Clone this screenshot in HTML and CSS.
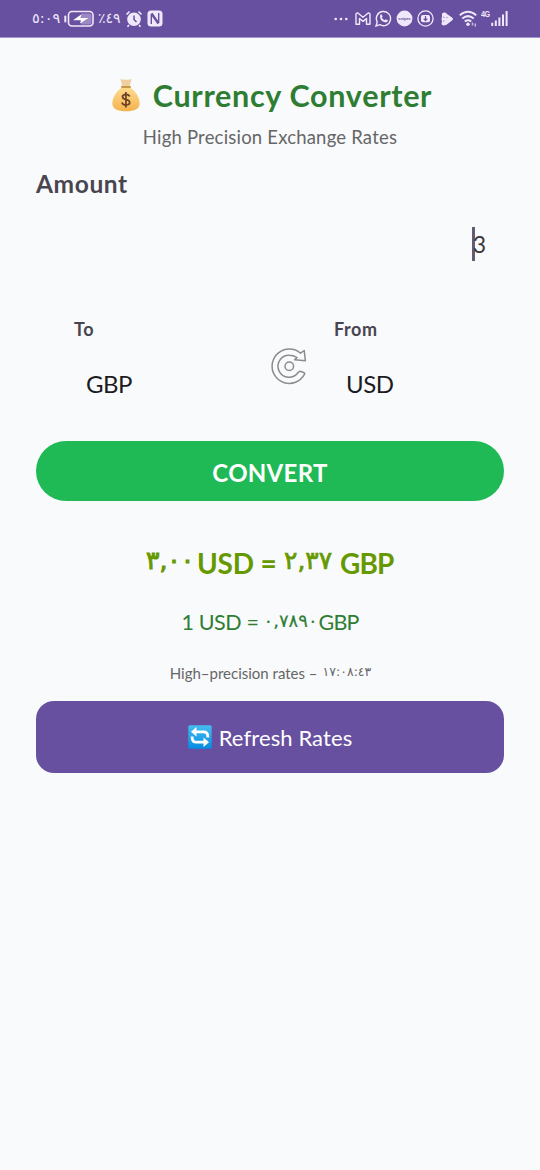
FILE: index.html
```html
<!DOCTYPE html>
<html lang="en">
<head>
<meta charset="utf-8">
<title>Currency Converter</title>
<link rel="stylesheet" href="styles.css">
</head>
<body>
<header class="status">
  <div class="status-left">
    <span class="ar clock">٥:٠٩</span>
    <svg class="battery" width="30" height="18" viewBox="0 0 30 18"><path d="M1.300 6.500v5" stroke="#efe8fa" stroke-width="2" stroke-linecap="round"/><rect x="4.500" y="1.500" width="24.500" height="14.500" rx="3.500" fill="#6850a1" stroke="#efe8fa" stroke-width="1.600"/><path d="M17 3.500h9q1.500 0 1.500 1.500v8q0 1.500-1.500 1.500H17z" fill="#9b88c5"/><path d="M9 10.300l8.500-6-1 3.700h8l-8.500 5.500 1-3.200z" fill="#fff"/></svg>
    <span class="ar percent">٪٤٩</span>
    <svg class="alarm" width="18" height="18" viewBox="0 0 18 18"><circle cx="9" cy="9.300" r="6.800" fill="#efe8fa"/><path d="M1.500 4.500l3-3M16.500 4.500l-3-3M4 15l-1.500 1.800M14 15l1.500 1.800" stroke="#efe8fa" stroke-width="1.600"/><path d="M9 5.500v4l2.500 2.500" fill="none" stroke="#6850a1" stroke-width="1.500"/></svg>
    <svg class="nfc" width="16" height="17" viewBox="0 0 16 17"><rect x=".5" y=".5" width="15" height="16" rx="3.500" fill="#efe8fa"/><path d="M4.300 14V4.500M11.700 12.500V3" fill="none" stroke="#6850a1" stroke-width="1.400"/><path d="M4.500 3.500l7 10" stroke="#6850a1" stroke-width="2.400"/></svg>
  </div>
  <div class="status-right">
    <svg class="dots" width="14" height="4" viewBox="0 0 14 4"><g fill="#efe8fa"><circle cx="1.700" cy="2" r="1.300"/><circle cx="7" cy="2" r="1.300"/><circle cx="12.300" cy="2" r="1.300"/></g></svg>
    <svg class="mail" width="16" height="14" viewBox="0 0 16 14"><path d="M1 2.500Q1 .8 2.800 1L8 5.300 13.200 1Q15 .8 15 2.500V12.300h-3.500V6.500L8 9.400 4.500 6.500v5.800H1z" fill="none" stroke="#efe8fa" stroke-width="1.400" stroke-linejoin="round"/></svg>
    <svg class="phone" width="17" height="17" viewBox="0 0 17 17"><path d="M1 16l1.200-4.100a7.100 7.100 0 1 1 2.700 2.800z" fill="none" stroke="#efe8fa" stroke-width="1.400"/><path d="M5.300 4.800l1.200-.5 1.200 2.300-.9 1q1 1.900 2.900 2.700l1-1.100 2.200 1.100q0 2-2.200 2.200Q5.400 11.500 5 7z" fill="#efe8fa"/></svg>
    <svg class="news" width="17" height="17" viewBox="0 0 17 17"><circle cx="8.500" cy="8.500" r="7.900" fill="#efe8fa"/><text x="8.500" y="10" text-anchor="middle" class="news-text">snipes</text></svg>
    <svg class="video" width="17" height="17" viewBox="0 0 17 17"><circle cx="8.500" cy="8.500" r="7.600" fill="none" stroke="#efe8fa" stroke-width="1.300"/><rect x="4" y="5" width="9" height="7.200" rx="2" fill="#efe8fa"/><path d="M8.500 6v4M6.700 8.600l1.800 2 1.800-2" fill="none" stroke="#6850a1" stroke-width="1.200"/></svg>
    <svg class="play" width="14" height="14" viewBox="0 0 14 14"><path d="M2 1.500Q5-.5 7 2l5 3.600q2 1.400 0 2.800l-5.500 4.400Q2 14.500 1.500 12L2 9.500 1.500 7 2 4.500z" fill="#efe8fa"/><path d="M3 4.800l1.500.7M3 9.300l1.500-.5" stroke="#9b88c5"/><circle cx="7" cy="5.500" r=".7" fill="#9b88c5"/></svg>
    <svg class="wifi" width="19" height="17" viewBox="0 0 19 17"><g fill="none" stroke="#efe8fa" stroke-width="2"><path d="M.8 5.200Q9 -1.800 17.200 5.200"/><path d="M3.300 8.500Q9 3.800 14.700 8.500"/><path d="M5.800 11.500Q9 9 12.200 11.500"/></g><circle cx="9" cy="14.300" r="1.700" fill="#efe8fa"/><path d="M13.500 12.500v3M16.300 13.500v3" stroke="#c7bae0" stroke-width="1.500"/></svg>
    <span class="net">4G</span>
    <svg class="signal" width="17" height="17" viewBox="0 0 17 17"><path d="M1.200 16v-3.300M4.800 16v-5.500M8.400 16V7.500M12 16V4.500M15.600 16V1" stroke="#efe8fa" stroke-width="2"/></svg>
  </div>
</header>
<main class="page">
  <h1 class="title">
    <svg width="30" height="34" viewBox="0 0 30 34"><defs><linearGradient id="bag" x2="0" y2="1"><stop offset="0" stop-color="#ffdc91"/><stop offset="1" stop-color="#f4b24e"/></linearGradient></defs><path d="M9.500 1q2.500 1 5.500 .8 3 .2 5.500-.8l-2 8.300h-7z" fill="#efcfa0"/><path d="M11 9h8q10 8 9.600 17Q28 33.300 15 33.300T1.400 26Q1 17 11 9z" fill="url(#bag)"/><rect x="10" y="8" width="10" height="2" rx="1" fill="#c9974e"/><path d="M18.600 18.500q-.7-2.200-3.600-2.200-3.500.1-3.500 2.500 0 2 3.400 2.700 3.800.7 3.800 3 0 2.400-3.800 2.500-3.300 0-3.900-2.500M14.900 14v15.500" fill="none" stroke="#6b4226" stroke-width="1.700"/></svg>
    <span class="title-text">Currency Converter</span>
  </h1>
  <p class="subtitle">High Precision Exchange Rates</p>
  <label class="amount-label">Amount</label>
  <div class="amount"><span class="caret"></span><span>3</span></div>
  <section class="pair">
    <div class="side"><div class="side-label to">To</div><div class="side-value gbp">GBP</div></div>
    <svg class="swap" width="40" height="40" viewBox="0 0 40 40"><g fill="none" stroke="#8c8c8c" stroke-width="1.500" stroke-linejoin="round"><circle cx="19.300" cy="20.200" r="4.300"/><path d="M30.500 7.200L34.200 4.500L35.400 14.800L24.600 13.800 27 11.600Q23.500 9.300 19.300 9.300a11 11 0 1 0 8.800 17.200q1-1.300 2.300-1.200L34 26.700q1.200 .6.400 1.700A17.200 17.200 0 1 1 19.300 3Q26 3 30.500 7.200z"/></g></svg>
    <div class="side"><div class="side-label from">From</div><div class="side-value usd">USD</div></div>
  </section>
  <button class="convert"><span>CONVERT</span></button>
  <div class="result"><span class="ar r1">٣,٠٠</span><span class="r2">USD =</span><span class="ar r3">٢,٣٧</span><span class="r4">GBP</span></div>
  <div class="rate"><span class="q1">1 USD =</span><span class="ar q2">٠,٧٨٩٠</span><span class="q3">GBP</span></div>
  <div class="updated"><span class="u1">High–precision rates –</span><span class="ar u2">١٧:٠٨:٤٣</span></div>
  <button class="refresh">
    <svg width="24" height="24" viewBox="0 0 24 24"><defs><linearGradient id="sky" x2="0" y2="1"><stop offset="0" stop-color="#45bdf0"/><stop offset="1" stop-color="#078ce3"/></linearGradient></defs><rect x=".3" y=".3" width="23.400" height="23.400" rx="1.500" fill="url(#sky)"/><path d="M7.500 6.800H15.500q4.300 0 4.300 4.500v1.200M16.500 17.200H8.500q-4.300 0-4.300-4.500v-1.200" fill="none" stroke="#fff" stroke-width="2.800"/><path d="M8.500 2v9.600L3 6.800zM15.500 12.400v9.600l5.500-4.800z" fill="#fff"/></svg>
    <span>Refresh Rates</span>
  </button>
</main>
</body>
</html>
```
FILE: styles.css
```css
* { box-sizing: border-box; }
body { margin: 0; min-height: 1170px; background: #f8fafc; font-family: Lato, sans-serif; color: #1c1b1f; }
svg { display: block; flex: none; }
button { border: 0; padding: 0; font-family: inherit; color: #fff; display: flex; align-items: center; justify-content: center; width: 100%; }
.ar { font-family: "DejaVu Sans", sans-serif; direction: ltr; unicode-bidi: bidi-override; white-space: nowrap; flex: none; }
.status { height: 38px; background: #6850a1; display: flex; justify-content: space-between; padding: 0 32px; color: #efe8fa; border-bottom: 1px solid #a595ca; }
.status-left, .status-right { display: flex; align-items: center; }
.clock { width: 27px; font-size: 14.500px; letter-spacing: -1.500px; margin-right: 5px; margin-top: -1px; }
.battery { margin-right: 4px; }
.percent { width: 23px; font-size: 14px; letter-spacing: -1.200px; margin: -2px 4px 0 0; }
.nfc { margin-left: 4px; }
.status-right { gap: 4px; }
.dots { margin-right: 3px; }
.news-text { font: bold 4px "Liberation Sans", sans-serif; fill: #6850a1; }
.play { margin-left: 2px; }
.wifi { margin-left: 1px; }
.net { font: bold 9px/10px "Liberation Sans", sans-serif; width: 8px; letter-spacing: -.5px; margin: -9px -2px 0 -1px; transform: scaleX(.8); transform-origin: left; }
.page { padding: 35px 36px 0; }
.title { margin: 0; height: 44px; display: flex; align-items: center; justify-content: center; gap: 12px; font-size: 30.500px; line-height: 44px; font-weight: 700; color: #2e7d32; letter-spacing: .7px; padding-left: 3px; }
.subtitle { margin: 7px 0 0; height: 26px; line-height: 26px; font-size: 18.500px; color: #666; text-align: center; letter-spacing: .2px; }
.amount-label { display: block; height: 34px; margin-top: 17px; line-height: 34px; font-size: 24.500px; font-weight: 700; color: #49454f; letter-spacing: .6px; }
.amount { margin-top: 25px; height: 36px; padding-right: 18px; display: flex; align-items: center; justify-content: flex-end; font-size: 23px; color: #3a383d; }
.caret { width: 3px; height: 34px; background: #625b71; margin-right: -2px; }
.pair { display: grid; grid-template-columns: 233px 40px 1fr; margin-top: 54px; height: 110px; }
.side-label { height: 26px; line-height: 26px; font-size: 18px; font-weight: 700; color: #49454f; padding-left: 38px; letter-spacing: .6px; }
.side-value { height: 32px; margin-top: 26px; line-height: 32px; font-size: 24px; padding-left: 50px; letter-spacing: -.5px; }
.from { padding-left: 25px; }
.usd { padding-left: 37px; }
.swap { margin: 30px 0 0 1px; }
.convert { height: 60px; margin-top: 15.400px; border-radius: 30px; background: #1fba55; font-size: 24px; font-weight: 700; letter-spacing: .3px; }
.convert span { padding-top: 2px; }
.result, .rate, .updated { display: flex; justify-content: center; align-items: center; white-space: nowrap; }
.result { height: 40px; margin-top: 41.600px; font-size: 28px; font-weight: 700; color: #669900; }
.r1, .r3 { font-size: 25px; line-height: 28px; font-weight: 400; -webkit-text-stroke: .7px #669900; margin-top: -4px; letter-spacing: -2.500px; }
.r1 { width: 51px; -webkit-text-stroke-width: 1px; letter-spacing: -3px; }
.r2 { width: 87px; letter-spacing: -.2px; }
.r3 { width: 56px; }
.r4 { width: 54px; letter-spacing: -.9px; }
.rate { height: 32px; margin-top: 23px; font-size: 21.500px; color: #2e7d32; }
.q1 { width: 82px; letter-spacing: -.4px; }
.q2 { width: 55px; font-size: 18px; letter-spacing: -2px; margin-top: -3px; -webkit-text-stroke: .2px #2e7d32; }
.q3 { width: 40px; letter-spacing: -.8px; }
.updated { height: 24px; margin-top: 23px; gap: 5px; font-size: 15px; color: #666; padding-left: 1px; }
.u2 { font-size: 12.500px; letter-spacing: -.9px; margin-top: -3px; }
.refresh { height: 72px; margin-top: 16px; border-radius: 18px; background: #6850a1; gap: 7px; font-size: 22px; letter-spacing: .1px; }
.refresh span { padding-top: 1px; }
```
